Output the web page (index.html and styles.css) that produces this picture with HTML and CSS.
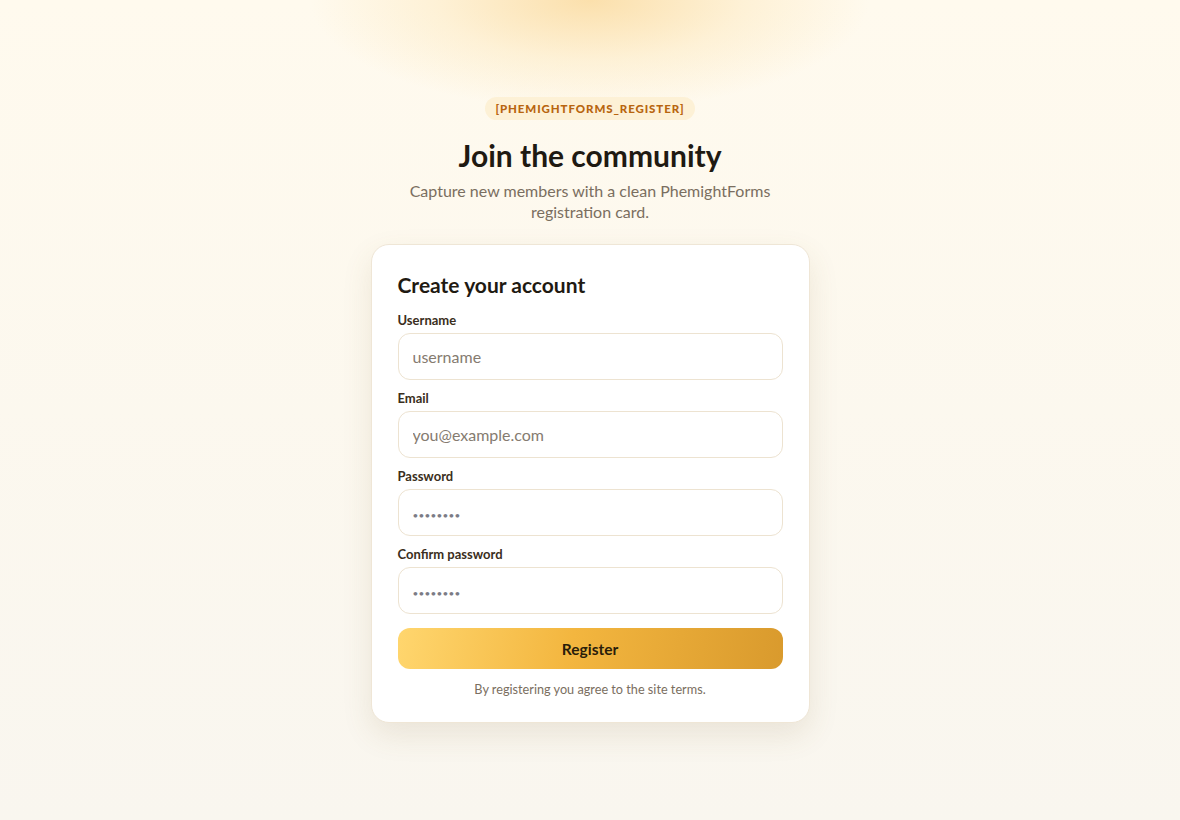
FILE: index.html
```html
<!DOCTYPE html>
<html lang="en">
<head>
    <meta charset="UTF-8">
    <meta name="viewport" content="width=device-width, initial-scale=1.0">
    <title>PhemightForms Register</title>
    <link rel="stylesheet" href="styles.css">
</head>
<body>
    <div class="glow"></div>
    <main class="page">
        <span class="badge">[phemightforms_register]</span>
        <h1>Join the community</h1>
        <p class="lead">Capture new members with a clean PhemightForms registration card.</p>

        <!-- Registration card -->
        <form class="card" onsubmit="return false;">
            <h2>Create your account</h2>

            <div class="field">
                <label for="username">Username</label>
                <input type="text" id="username" placeholder="username">
            </div>
            <div class="field">
                <label for="email">Email</label>
                <input type="email" id="email" placeholder="you@example.com">
            </div>
            <div class="field">
                <label for="password">Password</label>
                <input type="password" id="password" class="secret" placeholder="••••••••">
            </div>
            <div class="field">
                <label for="confirm">Confirm password</label>
                <input type="password" id="confirm" class="secret" placeholder="••••••••">
            </div>

            <button type="submit">Register</button>
            <p class="terms">By registering you agree to the site terms.</p>
        </form>
    </main>
</body>
</html>
```

FILE: styles.css
```css
html {
    height: 100%;
}
body {
    margin: 0;
    min-height: 100%;
    background: linear-gradient(180deg, #fffaee 0%, #f9f6ef 100%);
    font-family: Lato, "Noto Sans", Arial, sans-serif;
    color: #1f1a12;
    position: relative;
    overflow: hidden;
}
.glow {
    position: absolute;
    top: -110px;
    left: 50%;
    width: 560px;
    height: 220px;
    margin-left: -280px;
    background: radial-gradient(closest-side, rgba(250, 215, 150, 0.75), rgba(252, 225, 170, 0.35) 55%, rgba(255, 240, 210, 0) 100%);
    pointer-events: none;
}
.page {
    position: relative;
    display: flex;
    flex-direction: column;
    align-items: center;
    padding-top: 97px;
}
/* Tag above the title */
.badge {
    display: inline-block;
    padding: 5px 10px;
    border-radius: 999px;
    background-color: #fdf1d6;
    color: #b8650f;
    font-size: 11.5px;
    font-weight: 900;
    letter-spacing: 0.9px;
    text-transform: uppercase;
    line-height: 13px;
}
h1 {
    margin: 18px 0 0;
    font-size: 30px;
    line-height: 34px;
    font-weight: 700;
    color: #1f1a12;
}
.lead {
    margin: 8px 0 0;
    max-width: 390px;
    text-align: center;
    font-size: 16px;
    line-height: 21px;
    color: #7a6e60;
}
/* Card */
.card {
    box-sizing: border-box;
    width: 439px;
    margin-top: 22px;
    padding: 27px 26px 25px;
    background-color: #fff;
    border: 1px solid #efe6d6;
    border-radius: 18px;
    box-shadow: 0 12px 30px rgba(120, 95, 50, 0.12);
}
.card h2 {
    margin: 0 0 14px;
    font-size: 21px;
    line-height: 26px;
    font-weight: 700;
    color: #1f1a12;
}
.field {
    display: flex;
    flex-direction: column;
    gap: 5px;
    margin-bottom: 10px;
}
.field label {
    font-size: 13px;
    line-height: 16px;
    font-weight: 700;
    color: #3a2e20;
}
.field input {
    box-sizing: border-box;
    height: 47px;
    padding: 0 14px;
    border: 1px solid #ede3d1;
    border-radius: 12px;
    font-family: inherit;
    font-size: 16px;
    color: #1f1a12;
    background-color: #fff;
    outline: none;
}
.field input::placeholder {
    color: #857b70;
}
.field input.secret::placeholder {
    font-size: 10px;
    letter-spacing: 0.2px;
    color: #7c7c86;
}
button {
    display: block;
    width: 100%;
    height: 41px;
    margin-top: 14px;
    border: none;
    border-radius: 12px;
    background: linear-gradient(100deg, #ffd66e 0%, #f3b63f 45%, #d99a2d 100%);
    font-family: inherit;
    font-size: 15.5px;
    font-weight: 700;
    color: #2a1d0a;
    cursor: pointer;
}
.terms {
    margin: 13px 0 0;
    text-align: center;
    font-size: 12.7px;
    line-height: 15px;
    color: #7a6e60;
}
```
